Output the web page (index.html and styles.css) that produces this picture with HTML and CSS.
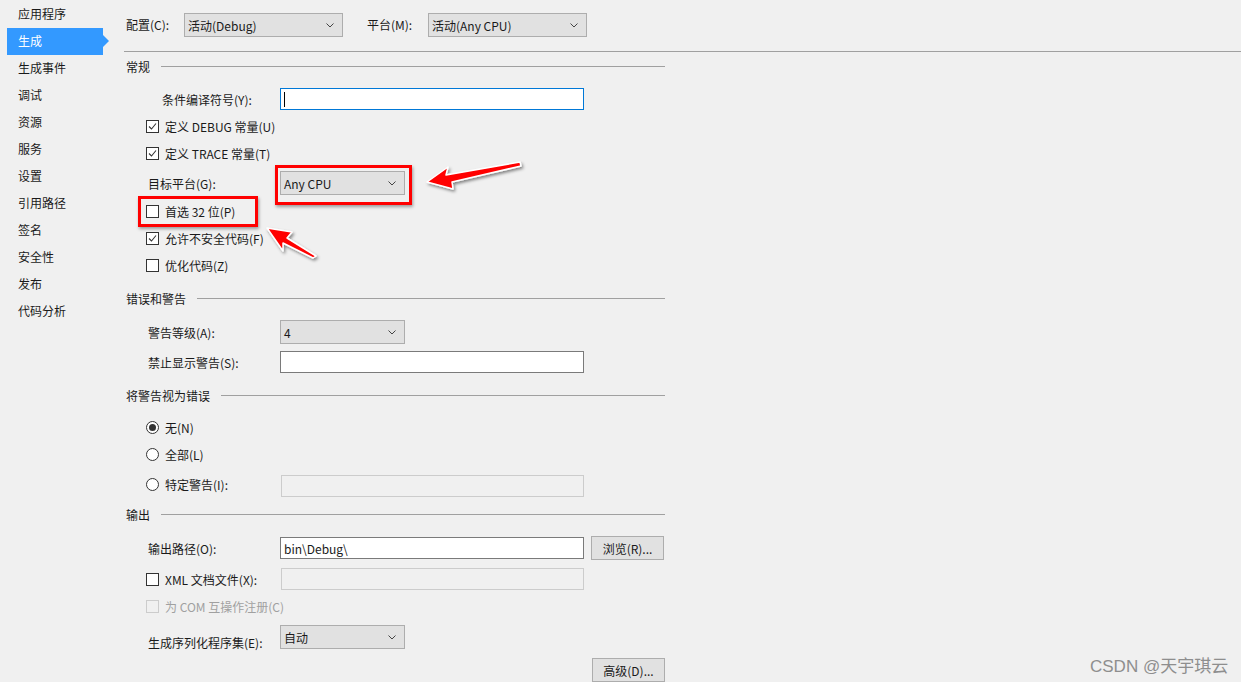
FILE: index.html
```html
<!DOCTYPE html>
<html lang="zh-CN">
<head>
<meta charset="utf-8">
<title>生成</title>
<link rel="stylesheet" href="styles.css">
</head>
<body>
<div class="page">
  <nav class="sidebar">
    <div class="nav-item">应用程序</div>
    <div class="nav-item active">生成</div>
    <div class="nav-item">生成事件</div>
    <div class="nav-item">调试</div>
    <div class="nav-item">资源</div>
    <div class="nav-item">服务</div>
    <div class="nav-item">设置</div>
    <div class="nav-item">引用路径</div>
    <div class="nav-item">签名</div>
    <div class="nav-item">安全性</div>
    <div class="nav-item">发布</div>
    <div class="nav-item">代码分析</div>
  </nav>

  <main class="main">
    <div class="topbar">
      <span class="top-lbl cfg">配置(C):</span>
      <div class="combo wide"><span>活动(Debug)</span><svg class="chev" width="8" height="5" viewBox="0 0 8 5"><path d="M0.5 0.5 L4 4 L7.5 0.5" fill="none" stroke="#444" stroke-width="1"/></svg></div>
      <span class="top-lbl plat">平台(M):</span>
      <div class="combo wide"><span>活动(Any CPU)</span><svg class="chev" width="8" height="5" viewBox="0 0 8 5"><path d="M0.5 0.5 L4 4 L7.5 0.5" fill="none" stroke="#444" stroke-width="1"/></svg></div>
    </div>

    <div class="form">
      <div class="section-h m2"><span>常规</span><i class="rule"></i></div>

      <div class="row m9"><span class="lbl indent">条件编译符号(Y):</span><div class="input focus"><i class="caret"></i></div></div>

      <div class="row chk-row m3"><span class="check on"><svg width="11" height="11" viewBox="0 0 11 11"><path d="M2 5.5 L4.5 8 L9 2.5" fill="none" stroke="#333" stroke-width="1.1"/></svg></span><span>定义 DEBUG 常量(U)</span></div>
      <div class="row chk-row m3"><span class="check on"><svg width="11" height="11" viewBox="0 0 11 11"><path d="M2 5.5 L4.5 8 L9 2.5" fill="none" stroke="#333" stroke-width="1.1"/></svg></span><span>定义 TRACE 常量(T)</span></div>

      <div class="row m6"><span class="lbl">目标平台(G):</span><div class="combo narrow"><span>Any CPU</span><svg class="chev" width="8" height="5" viewBox="0 0 8 5"><path d="M0.5 0.5 L4 4 L7.5 0.5" fill="none" stroke="#444" stroke-width="1"/></svg></div></div>

      <div class="row chk-row m4"><span class="check"></span><span>首选 32 位(P)</span></div>
      <div class="row chk-row m3"><span class="check on"><svg width="11" height="11" viewBox="0 0 11 11"><path d="M2 5.5 L4.5 8 L9 2.5" fill="none" stroke="#333" stroke-width="1.1"/></svg></span><span>允许不安全代码(F)</span></div>
      <div class="row chk-row m3"><span class="check"></span><span>优化代码(Z)</span></div>

      <div class="section-h m9"><span>错误和警告</span><i class="rule"></i></div>

      <div class="row m10"><span class="lbl">警告等级(A):</span><div class="combo narrow"><span>4</span><svg class="chev" width="8" height="5" viewBox="0 0 8 5"><path d="M0.5 0.5 L4 4 L7.5 0.5" fill="none" stroke="#444" stroke-width="1"/></svg></div></div>
      <div class="row m6"><span class="lbl">禁止显示警告(S):</span><div class="input"></div></div>

      <div class="section-h m9"><span>将警告视为错误</span><i class="rule"></i></div>

      <div class="row chk-row m8"><span class="radio on"></span><span>无(N)</span></div>
      <div class="row chk-row m3"><span class="radio"></span><span>全部(L)</span></div>
      <div class="row m6"><span class="lbl-check"><span class="radio"></span><span>特定警告(I):</span></span><div class="input disabled shift"></div></div>

      <div class="section-h m6"><span>输出</span><i class="rule"></i></div>

      <div class="row m10"><span class="lbl">输出路径(O):</span><div class="input"><span class="val">bin\Debug\</span></div><div class="btn">浏览(R)...</div></div>
      <div class="row m7"><span class="lbl-check"><span class="check dark"></span><span>XML 文档文件(X):</span></span><div class="input disabled"></div></div>
      <div class="row chk-row m3 dim"><span class="check off"></span><span>为 COM 互操作注册(C)</span></div>

      <div class="row top m7"><span class="lbl low">生成序列化程序集(E):</span><div class="combo narrow"><span>自动</span><svg class="chev" width="8" height="5" viewBox="0 0 8 5"><path d="M0.5 0.5 L4 4 L7.5 0.5" fill="none" stroke="#444" stroke-width="1"/></svg></div></div>

      <div class="row end m9"><div class="btn">高级(D)...</div></div>
    </div>
  </main>

  <div class="mark box-a"></div>
  <div class="mark box-b"></div>
  <svg class="arrows" width="1241" height="682" viewBox="0 0 1241 682">
    <defs>
      <filter id="sh" x="-20%" y="-50%" width="140%" height="200%">
        <feDropShadow dx="1.5" dy="2" stdDeviation="1.6" flood-color="#000" flood-opacity="0.45"/>
      </filter>
    </defs>
    <polygon points="427,182 448,167 446,175 520,162 521,166 452,182 453,189" fill="#ff0000" stroke="#fff" stroke-width="1.5" stroke-linejoin="round" filter="url(#sh)"/>
    <polygon points="267,228 292,232 287,238 316,256 313,258 283,243 283,251" fill="#ff0000" stroke="#fff" stroke-width="1.5" stroke-linejoin="round" filter="url(#sh)"/>
  </svg>
  <div class="watermark">CSDN @天宇琪云</div>
</div>
</body>
</html>
```

FILE: styles.css
```css
html, body {
  margin: 0;
  padding: 0;
  background: #f0f0f0;
}
body {
  font-family: "Noto Sans CJK SC", "Noto Sans", "Liberation Sans", sans-serif;
  font-size: 12px;
  color: #1a1a1a;
}
.page {
  position: relative;
  width: 1241px;
  height: 682px;
  overflow: hidden;
  display: flex;
}

/* sidebar */
.sidebar {
  width: 124px;
  flex: none;
  padding-top: 1px;
}
.nav-item {
  height: 27px;
  line-height: 26px;
  padding-left: 18px;
  white-space: nowrap;
}
.nav-item.active {
  position: relative;
  margin-left: 7px;
  width: 96px;
  padding-left: 11px;
  box-sizing: border-box;
  background: #3399ff;
  color: #fff;
}
.nav-item.active::after {
  content: "";
  position: absolute;
  right: -6px;
  top: 7px;
  border-left: 6px solid #3399ff;
  border-top: 6px solid transparent;
  border-bottom: 6px solid transparent;
}

/* main */
.main {
  flex: 1;
  display: flex;
  flex-direction: column;
}
.topbar {
  height: 54px;
  box-sizing: border-box;
  border-bottom: 1px solid #a0a0a0;
  padding-top: 13px;
  display: flex;
  align-items: flex-start;
}
.top-lbl {
  height: 24px;
  line-height: 24px;
  box-sizing: border-box;
  padding-left: 2px;
  white-space: nowrap;
}
.top-lbl.cfg { width: 60px; }
.top-lbl.plat { width: 61px; margin-left: 24px; padding-left: 0; }

.combo {
  height: 24px;
  box-sizing: border-box;
  border: 1px solid #adadad;
  background: #e1e1e1;
  display: flex;
  align-items: center;
  justify-content: space-between;
  padding: 0 8px 0 3px;
  flex: none;
}
.combo.wide { width: 159px; }
.combo.narrow { width: 125px; }
.combo .chev { flex: none; }

.form {
  width: 541px;
  display: flex;
  flex-direction: column;
}
.section-h {
  height: 24px;
  display: flex;
  align-items: center;
  padding-left: 2px;
}
.rule {
  flex: 1;
  height: 1px;
  background: #a0a0a0;
  margin-left: 11px;
}

.row {
  height: 24px;
  display: flex;
  align-items: center;
  white-space: nowrap;
}
.row.top { align-items: flex-start; }
.row.end { justify-content: flex-end; }
.chk-row { padding-left: 22px; }

.lbl {
  width: 156px;
  flex: none;
  box-sizing: border-box;
  padding-left: 24px;
}
.lbl.indent { padding-left: 38px; }
.lbl.low { line-height: 24px; padding-top: 6px; }
.lbl-check {
  width: 157px;
  flex: none;
  box-sizing: border-box;
  padding-left: 22px;
  display: flex;
  align-items: center;
}

.check {
  width: 13px;
  height: 13px;
  flex: none;
  box-sizing: border-box;
  border: 1px solid #333;
  background: #fff;
  margin-right: 6px;
  display: flex;
  align-items: center;
  justify-content: center;
}
.check.off { border-color: #cccccc; background: #f0f0f0; }
.dim { color: #a0a0a0; }

.radio {
  width: 13px;
  height: 13px;
  flex: none;
  box-sizing: border-box;
  border: 1px solid #333;
  border-radius: 50%;
  background: #fff;
  margin-right: 6px;
  display: flex;
  align-items: center;
  justify-content: center;
}
.radio.on::after {
  content: "";
  width: 7px;
  height: 7px;
  border-radius: 50%;
  background: #333;
}

.input {
  width: 304px;
  height: 22px;
  flex: none;
  box-sizing: border-box;
  border: 1px solid #7a7a7a;
  background: #fff;
  display: flex;
  align-items: center;
  padding-left: 2px;
}
.input.focus { border-color: #0078d7; }
.input.disabled {
  background: #f0f0f0;
  border-color: #cccccc;
  width: 303px;
}
.input.shift { margin-top: 4px; }
.caret {
  width: 1px;
  height: 15px;
  background: #000;
  margin-left: 1px;
}
.val { padding-left: 1px; }

.btn {
  width: 73px;
  height: 24px;
  flex: none;
  box-sizing: border-box;
  border: 1px solid #adadad;
  background: #e1e1e1;
  margin-left: 7px;
  display: flex;
  align-items: center;
  justify-content: center;
}

.m2 { margin-top: 2px; }
.m3 { margin-top: 3px; }
.m4 { margin-top: 4px; }
.m6 { margin-top: 6px; }
.m7 { margin-top: 7px; }
.m8 { margin-top: 8px; }
.m9 { margin-top: 9px; }
.m10 { margin-top: 10px; }

/* annotations */
.mark {
  position: absolute;
  box-sizing: border-box;
  border: 3px solid #ff0000;
  box-shadow: 1px 2px 3px rgba(0, 0, 0, 0.35);
}
.box-a { left: 275px; top: 165px; width: 137px; height: 40px; }
.box-b { left: 138px; top: 196px; width: 120px; height: 31px; }
.arrows {
  position: absolute;
  left: 0;
  top: 0;
  pointer-events: none;
}
.watermark {
  position: absolute;
  left: 1090px;
  top: 652px;
  font-size: 17px;
  color: #8e8e8e;
  white-space: nowrap;
  font-family: "Liberation Sans", "Noto Sans CJK SC", sans-serif;
}
```
